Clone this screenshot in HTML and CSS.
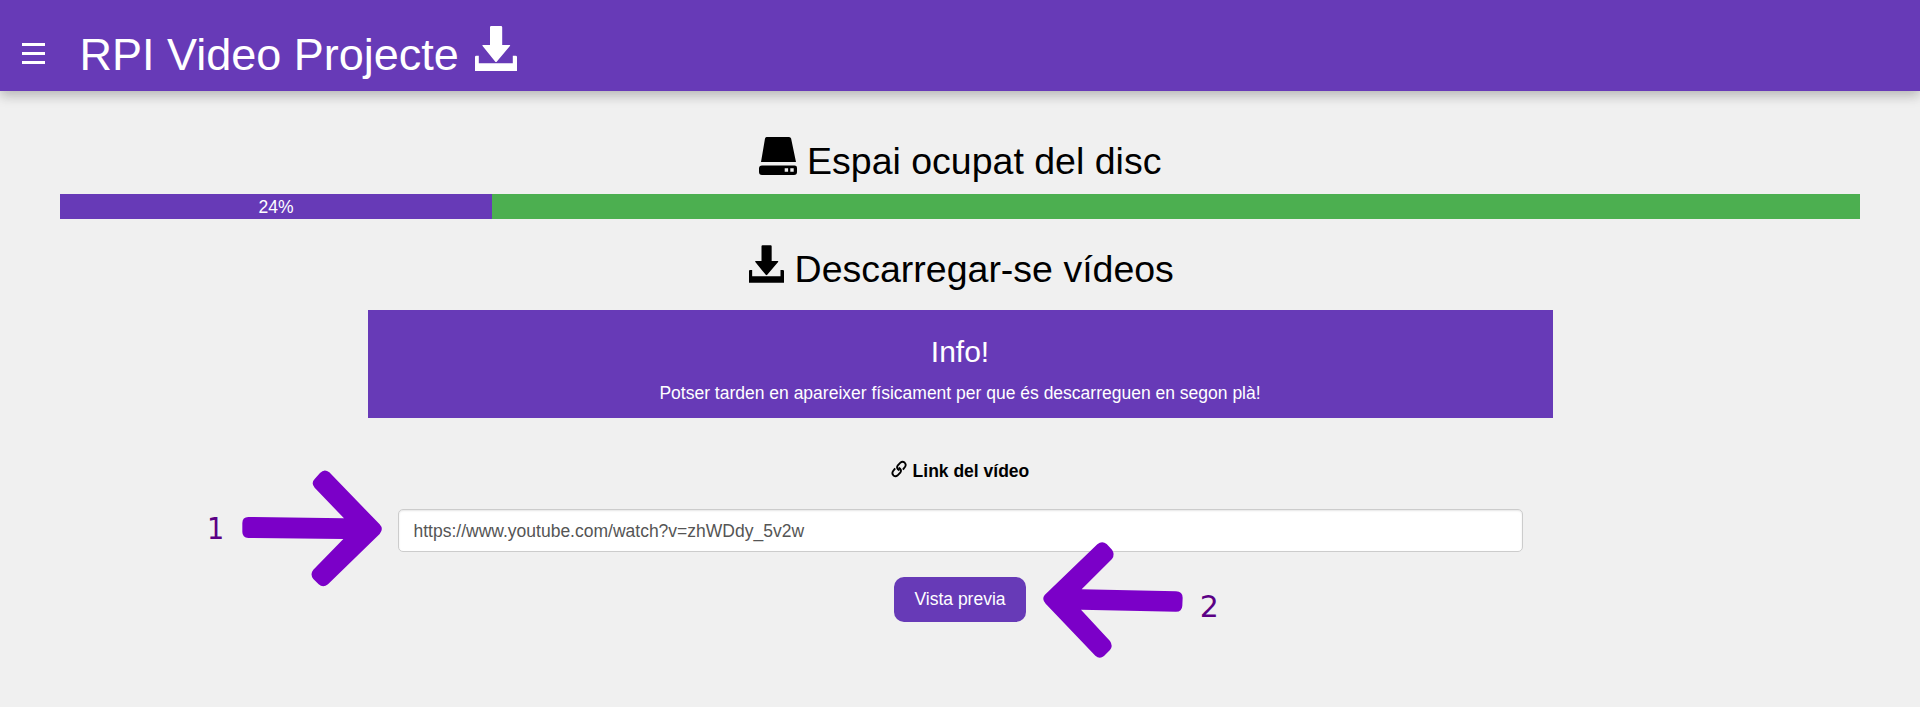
FILE: index.html
```html
<!DOCTYPE html>
<html lang="ca">
<head>
<meta charset="utf-8">
<title>RPI Video Projecte</title>
<link rel="stylesheet" href="styles.css">
</head>
<body>
<svg width="0" height="0" class="defs">
  <symbol id="save" viewBox="0 0 42 45"><path d="M16.200 0h9.800q1.200 0 1.200 1.200V19h7.300q1.200 0 .4 1L21.900 35.500q-.9 1-1.800 0L7.600 20q-.8-1 .4-1h7V1.200Q15 0 16.200 0zM0 31q0-1.200 1.200-1.200h2.600V37.300h34V29.800h2.900q1.300 0 1.300 1.200V45H0z"/></symbol>
  <symbol id="hdd" viewBox="0 0 38 38"><path d="M7.500 0h22.500q1.700 0 2.100 1.500L37 25H2L6 1.500Q6.400 0 7.500 0zM3 28.500h32.500q2.500 0 2.500 2.300V35q0 3-3 3H3q-3 0-3-3v-3.500q0-3 3-3zM25.700 31.200v3.600h3.400v-3.600zM31.300 31.200v3.600h3.400v-3.600z" fill-rule="evenodd"/></symbol>
</svg>
<header class="topbar">
  <button class="menu" aria-label="Menú"><span></span><span></span><span></span></button>
  <h1 class="title">RPI Video Projecte <svg class="icon-lg"><use href="#save"/></svg></h1>
</header>
<main class="content">
  <h2 class="heading"><svg class="icon-hdd"><use href="#hdd"/></svg> Espai ocupat del disc</h2>
  <div class="progress"><div class="bar" style="width:24%">24%</div></div>
  <h2 class="heading second"><svg class="icon-save"><use href="#save"/></svg> Descarregar-se vídeos</h2>
  <section class="panel">
    <h3 class="panel-title">Info!</h3>
    <p class="panel-text">Potser tarden en apareixer físicament per que és descarreguen en segon plà!</p>
  </section>
  <form class="form">
    <label class="label" for="link"><svg class="icon-link" viewBox="0 0 18 18"><g fill="none" stroke="#000" stroke-width="2"><path d="M9 10.500Q5.200 8.300 7 5.500L10.200 2Q12.200 .4 14.400 2.200Q16.400 4.200 14.900 6.600L12.600 9.600"/><path d="M8 7.500Q11.800 9.700 10 12.500L6.800 16Q4.800 17.600 2.600 15.800Q.6 13.800 2.100 11.400L4.400 8.400"/></g></svg> Link del vídeo</label>
    <input class="input" id="link" type="text" value="https://www.youtube.com/watch?v=zhWDdy_5v2w">
    <button class="submit" type="button">Vista previa</button>
  </form>
</main>
<div class="note note-one"><span class="number">1</span>
  <svg class="arrow" viewBox="150 50 440 370"><path d="M157 218Q157 200 175 200L462 204L374 112Q362 98 374 86L390 68Q403 54 418 66L569 222Q582 236 569 251L414 402Q399 414 386 402L370 386Q359 372 370 358L460 266L175 263Q157 262 157 245Z"/></svg></div>
<div class="note note-two"><svg class="arrow" viewBox="60 50 440 370"><path d="M74 224L232 72Q246 60 260 71L276 88Q286 102 276 116L185 207L468 213Q488 214 488 232L487 256Q486 274 468 274L183 268L270 362Q280 377 270 389L252 407Q239 418 226 406L77 250Q64 236 74 224Z"/></svg>
  <span class="number">2</span></div>
</body>
</html>
```
FILE: styles.css
```css
* { box-sizing: border-box; }
html, body { height: 100%; overflow: hidden; }
body { margin: 0; background: #f0f0f0; color: #000; font: 17.5px/25px "Liberation Sans", Arial, sans-serif; }
h1, h2, h3, p { margin: 0; font-weight: 400; }
svg { fill: currentColor; }
.defs { position: absolute; }
.topbar { height: 91px; padding: 18px 22px 0; display: flex; align-items: flex-start; color: #fff; background: #673ab7; box-shadow: 0 5px 12px rgba(0,0,0,.16), 0 2px 12px rgba(0,0,0,.12); }
.menu { width: 23px; margin-top: 25px; padding: 0; border: 0; background: none; display: flex; flex-direction: column; gap: 6.500px; }
.menu span { height: 2.500px; background: #fff; }
.title { margin-left: 34.500px; font-size: 45px; line-height: 74px; white-space: nowrap; }
.icon-lg { width: 42px; height: 45px; vertical-align: -1px; margin-left: 3.500px; }
.content { padding: 45px 60px 0; text-align: center; }
.heading { font-size: 37.5px; line-height: 50px; height: 58px; }
.icon-hdd { width: 38px; height: 38px; vertical-align: -1px; }
.icon-save { width: 35px; height: 38px; vertical-align: -1px; margin-left: 3px; }
.progress { height: 25px; background: #4caf50; }
.bar { height: 25px; line-height: 27px; background: #673ab7; color: #fff; }
.second { margin-top: 25px; height: 66px; }
.panel { width: 1185px; height: 108px; margin: 0 auto; padding-top: 24px; background: #673ab7; color: #fff; }
.panel-title { font-size: 30px; line-height: 36px; margin-bottom: 11px; }
.form { display: flex; flex-direction: column; align-items: center; padding-top: 41px; }
.label { font-weight: 700; }
.icon-link { width: 17px; height: 18px; vertical-align: -1px; }
.input { width: 1125px; height: 43px; margin-top: 25px; padding: 9px 15px 7px; border: 1px solid #ccc; border-radius: 5px; background: #fff; color: #555; font: inherit; box-shadow: inset 0 1px 2px rgba(0,0,0,.1); }
.submit { width: 132px; height: 45px; margin-top: 25px; padding: 0; border: 0; border-radius: 10px; background: #673ab7; color: #fff; font: inherit; }
.note { position: absolute; display: flex; color: #5b0085; }
.note-one { left: 207px; top: 467px; }
.note-two { left: 1040px; top: 537px; }
.number { font: 30px/30px "DejaVu Sans", sans-serif; }
.arrow { width: 146.67px; height: 123.33px; fill: #7b00c8; }
.note-one .number { width: 33px; margin-top: 47px; font-family: "DejaVu Sans Condensed", "DejaVu Sans", sans-serif; font-stretch: condensed; }
.note-two .number { margin: 55px 0 0 13px; }
```
